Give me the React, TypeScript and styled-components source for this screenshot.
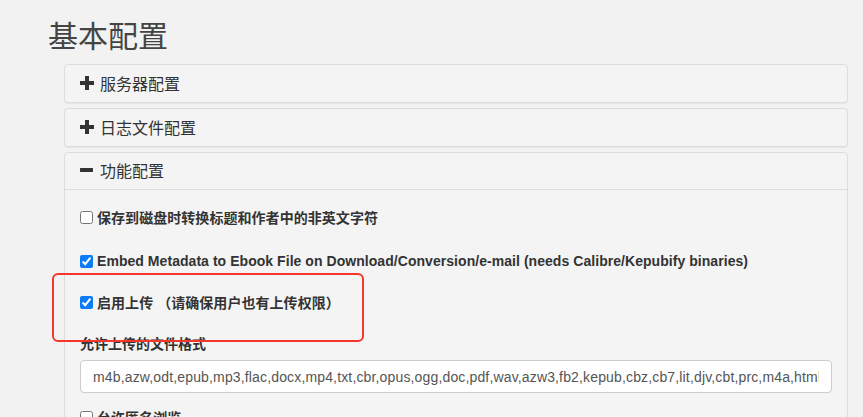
import React from "react";
import styled, { createGlobalStyle } from "styled-components";

const Global = createGlobalStyle`
  html, body { margin: 0; padding: 0; background: #f2f2f2; }
  body {
    font-family: "Liberation Sans", Arial, "Noto Sans CJK SC", sans-serif;
    color: #333;
    overflow: hidden;
  }
`;

const Page = styled.div`
  position: relative;
  padding: 20px 15px 0 48px;
`;

const Title = styled.h2`
  margin: 0 0 11px 0;
  font-size: 30px;
  line-height: 33px;
  font-weight: 400;
  color: #444;
  font-family: "Liberation Sans", "Noto Sans CJK SC", sans-serif;
`;

const Group = styled.div`
  margin-left: 16px;
  display: flex;
  flex-direction: column;
  gap: 5px;
`;

const Panel = styled.div`
  background: #f4f4f4;
  border: 1px solid #dddddd;
  border-radius: 4px;
  box-shadow: 0 1px 1px rgba(0, 0, 0, 0.06);
`;

const Header = styled.div<{ $open?: boolean }>`
  height: 37px;
  box-sizing: border-box;
  padding: 0 15px 2px 15px;
  display: flex;
  align-items: center;
  gap: 6px;
  font-size: 16px;
  color: #333;
  font-family: "Liberation Sans", "Noto Sans CJK SC", sans-serif;
  border-bottom: ${(p) => (p.$open ? "1px solid #dddddd" : "none")};
`;

const Body = styled.div`
  padding: 17px 15px 15px 15px;
  display: flex;
  flex-direction: column;
`;

const CheckRow = styled.label<{ $mt?: number }>`
  display: flex;
  align-items: center;
  gap: 4px;
  height: 20px;
  margin-top: ${(p) => p.$mt ?? 0}px;
  font-size: 14px;
  font-weight: 700;
  letter-spacing: 0.05px;
  color: #333;
  font-family: "Liberation Sans", "Noto Sans CJK SC", sans-serif;
`;

const Box = styled.input.attrs({ type: "checkbox" })`
  width: 13px;
  height: 13px;
  margin: 0;
  accent-color: #0b7bf6;
`;

const FieldLabel = styled.div`
  margin-top: 22px;
  height: 20px;
  line-height: 20px;
  font-size: 14px;
  font-weight: 700;
  color: #333;
  font-family: "Liberation Sans", "Noto Sans CJK SC", sans-serif;
`;

const TextInput = styled.input`
  margin-top: 6px;
  height: 33px;
  box-sizing: border-box;
  width: 100%;
  padding: 0 12px;
  border: 1px solid #cccccc;
  border-radius: 4px;
  background: #ffffff;
  font-size: 14px;
  letter-spacing: 0.15px;
  color: #555;
  font-family: "Liberation Sans", Arial, sans-serif;
  outline: none;
`;

const Highlight = styled.div`
  position: absolute;
  left: 52px;
  top: 273px;
  width: 312px;
  height: 69px;
  box-sizing: border-box;
  border: 2px solid #f4372a;
  border-radius: 6px;
  pointer-events: none;
`;

const Plus = () => (
  <svg width="14" height="14" viewBox="0 0 14 14">
    <rect x="5" y="0" width="4" height="14" fill="#333" />
    <rect x="0" y="5" width="14" height="4" fill="#333" />
  </svg>
);

const Minus = () => (
  <svg width="14" height="14" viewBox="0 0 14 14">
    <rect x="0" y="5" width="13" height="4" rx="0.5" fill="#333" />
  </svg>
);

export default function App() {
  return (
    <Page>
      <Global />
      <Title>基本配置</Title>
      <Group>
        <Panel>
          <Header>
            <Plus />
            <span>服务器配置</span>
          </Header>
        </Panel>
        <Panel>
          <Header>
            <Plus />
            <span>日志文件配置</span>
          </Header>
        </Panel>
        <Panel>
          <Header $open>
            <Minus />
            <span>功能配置</span>
          </Header>
          <Body>
            <CheckRow>
              <Box />
              <span>保存到磁盘时转换标题和作者中的非英文字符</span>
            </CheckRow>
            <CheckRow $mt={24}>
              <Box defaultChecked />
              <span>Embed Metadata to Ebook File on Download/Conversion/e-mail (needs Calibre/Kepubify binaries)</span>
            </CheckRow>
            <CheckRow $mt={21}>
              <Box defaultChecked />
              <span>启用上传 （请确保用户也有上传权限）</span>
            </CheckRow>
            <FieldLabel>允许上传的文件格式</FieldLabel>
            <TextInput
              readOnly
              value="m4b,azw,odt,epub,mp3,flac,docx,mp4,txt,cbr,opus,ogg,doc,pdf,wav,azw3,fb2,kepub,cbz,cb7,lit,djv,cbt,prc,m4a,html,mobi,rtf,djvu,pdb,lrf,cbz,kfx"
            />
            <CheckRow $mt={14}>
              <Box />
              <span>允许匿名浏览</span>
            </CheckRow>
            <CheckRow $mt={20}>
              <Box />
              <span>允许注册新用户</span>
            </CheckRow>
          </Body>
        </Panel>
      </Group>
      <Highlight />
    </Page>
  );
}
